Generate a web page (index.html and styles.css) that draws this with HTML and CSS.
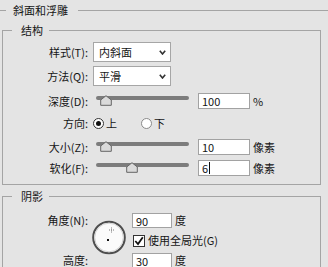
FILE: index.html
```html
<!DOCTYPE html>
<html lang="zh-CN">
<head>
    <meta charset="UTF-8">
    <meta name="viewport" content="width=device-width, initial-scale=1.0">
    <title>斜面和浮雕</title>
    <link rel="stylesheet" href="styles.css">
</head>
<body>
    <div class="title-row">
        <span class="line short"></span>
        <span class="title">斜面和浮雕</span>
        <span class="line grow"></span>
    </div>

    <fieldset class="group structure">
        <legend>结构</legend>

        <div class="row row-select">
            <label class="lbl">样式(T):</label>
            <div class="select">
                <span>内斜面</span>
                <svg class="chev" width="7" height="5" viewBox="0 0 7 5"><polyline points="0.8,0.8 3.5,4 6.2,0.8" fill="none" stroke="#333" stroke-width="1.6"/></svg>
            </div>
        </div>
        <div class="row row-select">
            <label class="lbl">方法(Q):</label>
            <div class="select">
                <span>平滑</span>
                <svg class="chev" width="7" height="5" viewBox="0 0 7 5"><polyline points="0.8,0.8 3.5,4 6.2,0.8" fill="none" stroke="#333" stroke-width="1.6"/></svg>
            </div>
        </div>

        <div class="row row-slider depth">
            <label class="lbl">深度(D):</label>
            <div class="slider">
                <span class="track"></span>
                <svg class="thumb" style="left:4px" width="12" height="11" viewBox="0 0 12 11"><path d="M6 0.7 L11.3 5 L11.3 10.3 L0.7 10.3 L0.7 5 Z" fill="#dadada" stroke="#666" stroke-width="1"/></svg>
            </div>
            <div class="field">100</div>
            <span class="unit">%</span>
        </div>

        <div class="row row-dir">
            <label class="lbl">方向:</label>
            <span class="opt"><span class="radio on"></span>上</span>
            <span class="opt second"><span class="radio"></span>下</span>
        </div>

        <div class="row row-slider size">
            <label class="lbl">大小(Z):</label>
            <div class="slider">
                <span class="track"></span>
                <svg class="thumb" style="left:4px" width="12" height="11" viewBox="0 0 12 11"><path d="M6 0.7 L11.3 5 L11.3 10.3 L0.7 10.3 L0.7 5 Z" fill="#dadada" stroke="#666" stroke-width="1"/></svg>
            </div>
            <div class="field">10</div>
            <span class="unit">像素</span>
        </div>

        <div class="row row-slider soften">
            <label class="lbl">软化(F):</label>
            <div class="slider">
                <span class="track"></span>
                <svg class="thumb" style="left:30px" width="12" height="11" viewBox="0 0 12 11"><path d="M6 0.7 L11.3 5 L11.3 10.3 L0.7 10.3 L0.7 5 Z" fill="#dadada" stroke="#666" stroke-width="1"/></svg>
            </div>
            <div class="field">6<span class="caret"></span></div>
            <span class="unit">像素</span>
        </div>
    </fieldset>

    <fieldset class="group shadow">
        <legend>阴影</legend>

        <div class="shadow-grid">
            <label class="lbl angle-lbl">角度(N):</label>
            <svg class="dial" width="34" height="35" viewBox="0 0 34 35">
                <circle cx="17" cy="17.5" r="15.8" fill="#fbfbfb" stroke="#4e4e4e" stroke-width="2"/>
                <circle cx="17" cy="17.5" r="14.3" fill="none" stroke="#d2d2d2" stroke-width="1"/>
                <path d="M19.5 7.5 V12.5 M17 10 H22" stroke="#7a7a7a" stroke-width="1" stroke-dasharray="1 1"/>
                <rect x="15" y="19" width="2" height="2" fill="#111"/>
            </svg>
            <div class="ctrl angle-ctrl">
                <div class="field">90</div>
                <span class="unit">度</span>
            </div>
            <div class="ctrl check-ctrl">
                <span class="check">
                    <svg width="10" height="10" viewBox="0 0 10 10"><polyline points="1.3,5 4,8 8.8,1.3" fill="none" stroke="#111" stroke-width="1.8"/></svg>
                </span>
                <span>使用全局光(G)</span>
            </div>
            <label class="lbl height-lbl">高度:</label>
            <div class="ctrl height-ctrl">
                <div class="field">30</div>
                <span class="unit">度</span>
            </div>
        </div>
    </fieldset>
</body>
</html>
```

FILE: styles.css
```css
html,
body {
    margin: 0;
    height: 100%;
    overflow: hidden;
}
body {
    background: #e4e4e4;
    color: #151515;
    font: 11px/15px "Noto Sans CJK SC", "Microsoft YaHei", sans-serif;
}
.title-row {
    display: flex;
    align-items: center;
    height: 21px;
}
.line {
    height: 1px;
    background: #a4a4a4;
}
.line.short {
    width: 6px;
}
.line.grow {
    flex: 1;
}
.title {
    margin: 0 10px 0 7px;
}
.group {
    margin: 2px 7px 0 2px;
    padding: 4px 0 8px;
    border: 1px solid #a4a4a4;
    min-width: 0;
}
.group legend {
    margin-left: 9px;
    padding: 0 6px 0 9px;
    height: 15px;
    line-height: 15px;
}
.shadow {
    margin-top: 4px;
    padding-top: 9px;
    padding-bottom: 4px;
}
.row {
    display: flex;
    align-items: center;
}
.lbl {
    flex: none;
    width: 85px;
    margin-right: 5px;
    text-align: right;
}
.row-select {
    height: 20px;
}
.row-select + .row-select {
    margin-top: 4px;
}
.select {
    box-sizing: border-box;
    width: 78px;
    height: 20px;
    display: flex;
    align-items: center;
    justify-content: space-between;
    padding: 0 4px 0 5px;
    border: 1px solid #a6a6a6;
    background: #fff;
}
.row-slider {
    height: 16px;
}
.depth {
    margin-top: 7px;
}
.size {
    margin-top: 9px;
}
.soften {
    margin-top: 5px;
}
.slider {
    position: relative;
    flex: none;
    align-self: flex-start;
    width: 93px;
    height: 16px;
    margin: 0 9px 0 3px;
}
.track {
    position: absolute;
    left: 0;
    right: 0;
    top: 3px;
    height: 4px;
    border-radius: 2px;
    background: #7c7c7c;
}
.thumb {
    position: absolute;
    top: 2px;
}
.field {
    box-sizing: border-box;
    display: flex;
    align-items: center;
    flex: none;
    width: 52px;
    height: 16px;
    padding-left: 3px;
    border: 1px solid #a2a2a2;
    background: #fff;
    line-height: 14px;
}
.caret {
    width: 1px;
    height: 12px;
    margin-left: 1px;
    background: #111;
}
.unit {
    margin-left: 3px;
}
.row-dir {
    height: 14px;
    margin-top: 7px;
}
.opt {
    display: flex;
    align-items: center;
    gap: 2px;
}
.opt.second {
    margin-left: 24px;
}
.radio {
    box-sizing: border-box;
    display: flex;
    align-items: center;
    justify-content: center;
    width: 11px;
    height: 11px;
    border: 1px solid #8a8a8a;
    border-radius: 50%;
    background: #fff;
}
.radio.on {
    border-color: #333;
}
.radio.on::after {
    content: "";
    width: 5px;
    height: 5px;
    border-radius: 50%;
    background: #111;
}
.shadow-grid {
    display: grid;
    grid-template-columns: 85px 36px auto;
    grid-template-rows: 15px 15px 15px;
    column-gap: 4px;
    row-gap: 5px;
    align-items: center;
}
.angle-lbl {
    grid-column: 1;
    grid-row: 1;
}
.height-lbl {
    grid-column: 1;
    grid-row: 3;
}
.dial {
    grid-column: 2;
    grid-row: 1 / 4;
    align-self: start;
    margin-top: 7px;
}
.ctrl {
    grid-column: 3;
    display: flex;
    align-items: center;
}
.ctrl .field {
    width: 40px;
    height: 15px;
}
.angle-ctrl {
    grid-row: 1;
}
.check-ctrl {
    grid-row: 2;
    margin-left: 1px;
    gap: 3px;
}
.height-ctrl {
    grid-row: 3;
}
.check {
    box-sizing: border-box;
    display: flex;
    align-items: center;
    justify-content: center;
    width: 12px;
    height: 12px;
    border: 1px solid #333;
    background: #fff;
}
```
